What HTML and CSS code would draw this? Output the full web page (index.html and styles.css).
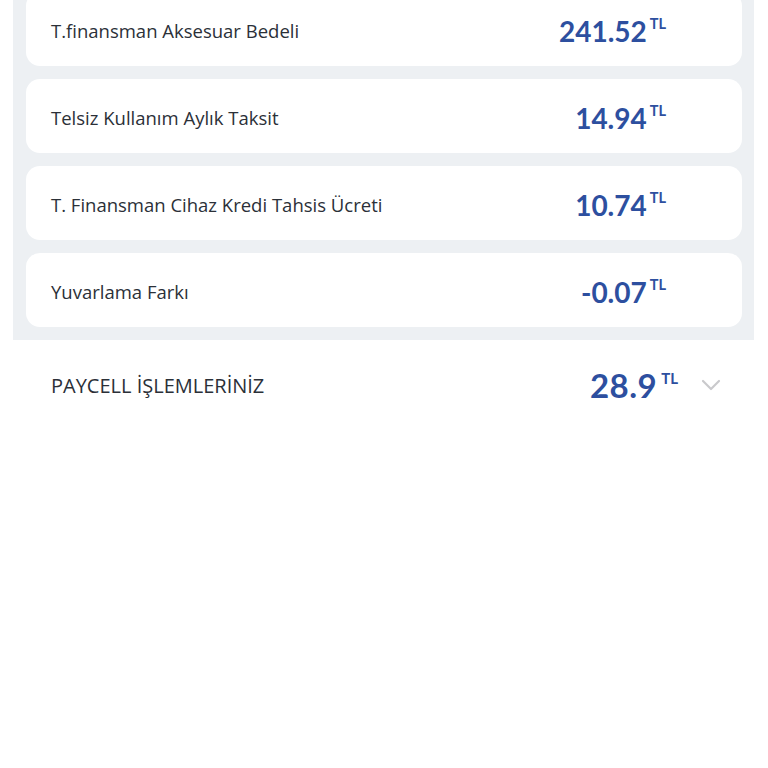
FILE: index.html
```html
<!DOCTYPE html>
<html lang="tr">
<head>
    <meta charset="UTF-8">
    <meta name="viewport" content="width=device-width, initial-scale=1.0">
    <title>Fatura Detayı</title>
    <link rel="stylesheet" href="styles.css">
</head>
<body>
    <div class="page">
        <!-- Detail list -->
        <div class="detail-panel">
            <div class="detail-row">
                <span class="label">T.finansman Aksesuar Bedeli</span>
                <span class="amount"><span class="num">241.52</span><span class="unit">TL</span></span>
            </div>
            <div class="detail-row">
                <span class="label">Telsiz Kullanım Aylık Taksit</span>
                <span class="amount"><span class="num">14.94</span><span class="unit">TL</span></span>
            </div>
            <div class="detail-row">
                <span class="label">T. Finansman Cihaz Kredi Tahsis Ücreti</span>
                <span class="amount"><span class="num">10.74</span><span class="unit">TL</span></span>
            </div>
            <div class="detail-row">
                <span class="label">Yuvarlama Farkı</span>
                <span class="amount"><span class="num">-0.07</span><span class="unit">TL</span></span>
            </div>
        </div>

        <!-- Paycell section -->
        <div class="section-row">
            <span class="section-title">PAYCELL İŞLEMLERİNİZ</span>
            <span class="amount big"><span class="num">28.9</span><span class="unit">TL</span></span>
            <svg class="chevron" width="20" height="12" viewBox="0 0 20 12">
                <path d="M2 2 L10 10 L18 2" fill="none" stroke="#c9c9cc" stroke-width="2.2" stroke-linecap="round" stroke-linejoin="round"/>
            </svg>
        </div>
    </div>
</body>
</html>
```

FILE: styles.css
```css
* {
    box-sizing: border-box;
}
body {
    margin: 0;
    background-color: #ffffff;
    font-family: 'Open Sans', 'Noto Sans', sans-serif;
    color: #2b3038;
}

.page {
    width: 768px;
    height: 768px;
    overflow: hidden;
}

.detail-panel {
    margin: -21px 14px 0 13px;
    padding: 13px 12px 13px 13px;
    background-color: #edf0f3;
    display: flex;
    flex-direction: column;
    gap: 13px;
}

.detail-row {
    height: 74px;
    background-color: #ffffff;
    border-radius: 14px;
    display: flex;
    align-items: center;
    padding: 3px 76px 0 25px;
}

.label {
    flex: 1;
    font-size: 18.5px;
    color: #2b3038;
}

.amount {
    display: flex;
    align-items: flex-start;
    font-family: 'Lato', sans-serif;
    font-weight: 700;
    color: #2d4f9f;
}

.num {
    font-size: 28px;
    line-height: 1;
}

.unit {
    font-size: 14.5px;
    line-height: 1;
    margin-left: 3px;
    margin-top: 0;
}

.section-row {
    display: flex;
    align-items: center;
    height: 91px;
    padding: 0 47px 0 51px;
}

.section-title {
    flex: 1;
    font-size: 20px;
    color: #2b3038;
}

.amount.big .num {
    font-size: 33px;
    letter-spacing: 0.5px;
}

.amount.big .unit {
    font-size: 15px;
    margin-left: 4px;
    margin-top: 2px;
}

.chevron {
    margin-left: 23px;
    margin-top: -2px;
}
```
